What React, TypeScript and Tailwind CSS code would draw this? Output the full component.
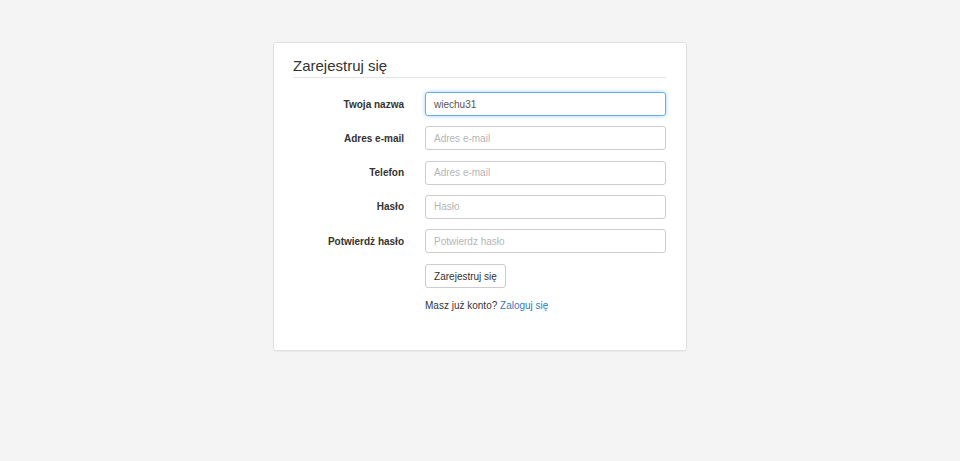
import React from "react";

const rows = [
  { label: "Twoja nazwa", value: "wiechu31", placeholder: "", focus: true },
  { label: "Adres e-mail", value: "", placeholder: "Adres e-mail" },
  { label: "Telefon", value: "", placeholder: "Adres e-mail" },
  { label: "Hasło", value: "", placeholder: "Hasło" },
  { label: "Potwierdż hasło", value: "", placeholder: "Potwierdz hasło" },
];

export default function App() {
  return (
    <div
      className="w-[960px] h-[461px] bg-[#f4f4f4] pt-[42px]"
      style={{ fontFamily: '"Liberation Sans", Arial, sans-serif' }}
    >
      <div className="ml-[273px] w-[414px] h-[309px] bg-white border border-[#e0e0e0] rounded-[3px] shadow-[0_1px_1px_rgba(0,0,0,0.04)] pl-[19px] pr-[20px] pt-[13px]">
        <h1 className="text-[15px] leading-[20px] text-[#333] pb-[1px] border-b border-[#e5e5e5]">
          Zarejestruj się
        </h1>
        <div className="mt-[14px] flex flex-col gap-[10.25px]">
          {rows.map((r) => (
            <div key={r.label} className="flex items-center h-[24px]">
              <div className="w-[111px] text-right text-[10px] font-bold text-[#333]">
                {r.label}
              </div>
              <div className="ml-[21px] w-[241px] h-[24px]">
                <div
                  className={
                    r.focus
                      ? "h-full rounded-[3px] border border-[#66afe9] shadow-[0_0_4px_rgba(102,175,233,0.6)] flex items-center pl-[8px] text-[10px] text-[#555]"
                      : "h-full rounded-[3px] border border-[#ccc] flex items-center pl-[8px] text-[10px] text-[#b5b5b5]"
                  }
                >
                  {r.value || r.placeholder}
                </div>
              </div>
            </div>
          ))}
        </div>
        <div className="ml-[132px] mt-[11px]">
          <div className="w-[81px] h-[24px] rounded-[3px] border border-[#ccc] flex items-center justify-center text-[10px] text-[#333]">
            Zarejestruj się
          </div>
          <div className="mt-[10px] text-[10px] text-[#333]">
            Masz już konto? <span className="text-[#337ab7]">Zaloguj się</span>
          </div>
        </div>
      </div>
    </div>
  );
}
